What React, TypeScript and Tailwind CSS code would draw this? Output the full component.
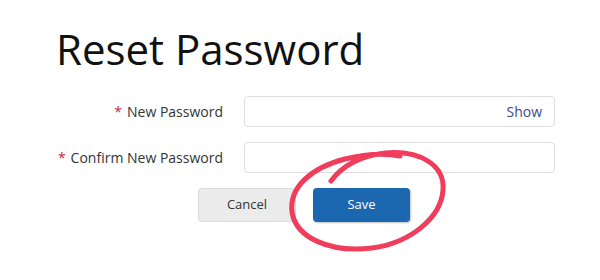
import React from "react";

const RedCircle = () => (
  <svg
    className="absolute left-0 top-0 pointer-events-none"
    width={600}
    height={280}
    viewBox="0 0 600 280"
    fill="none"
  >
    <path
      d="M331 181 C 342 166, 360 156, 385 153 C 420 150, 445 165, 443 190 C 441 218, 410 243, 372 248 C 330 253, 296 238, 292 212 C 289 188, 310 168, 345 159 C 365 154, 385 153, 400 156"
      stroke="#ef3d5b"
      strokeWidth={5}
      strokeLinecap="round"
      strokeLinejoin="round"
    />
  </svg>
);

export default function App() {
  return (
    <div className="relative w-[600px] h-[280px] bg-white font-['Open_Sans',sans-serif] overflow-hidden">
      <h1 className="pl-[56px] pt-[21px] text-[42px] leading-[56px] text-[#111] font-normal">
        Reset Password
      </h1>

      <div className="mt-[19px] flex flex-col gap-[15px]">
        <div className="flex items-center">
          <label className="w-[223px] text-right text-[14px] text-[#333]">
            <span className="text-[#c7254e] mr-[5px]">*</span>New Password
          </label>
          <div className="ml-[21px] w-[311px] h-[31px] rounded-[4px] border border-[#dedede] bg-white flex items-center justify-end pr-[12px]">
            <span className="text-[14px] text-[#3a4b8c]">Show</span>
          </div>
        </div>
        <div className="flex items-center">
          <label className="w-[223px] text-right text-[14px] text-[#333]">
            <span className="text-[#c7254e] mr-[5px]">*</span>Confirm New Password
          </label>
          <div className="ml-[21px] w-[311px] h-[31px] rounded-[4px] border border-[#dedede] bg-white" />
        </div>
      </div>

      <div className="mt-[15px] ml-[198px] flex gap-[17px]">
        <button className="w-[98px] h-[34px] rounded-[4px] bg-[#ebebeb] border border-[#dadada] text-[13px] text-[#333]">
          Cancel
        </button>
        <button className="w-[97px] h-[34px] rounded-[4px] bg-[#1b67b0] shadow-[1px_1px_2px_rgba(0,0,0,0.25)] text-[13px] text-white">
          Save
        </button>
      </div>

      <RedCircle />
    </div>
  );
}
